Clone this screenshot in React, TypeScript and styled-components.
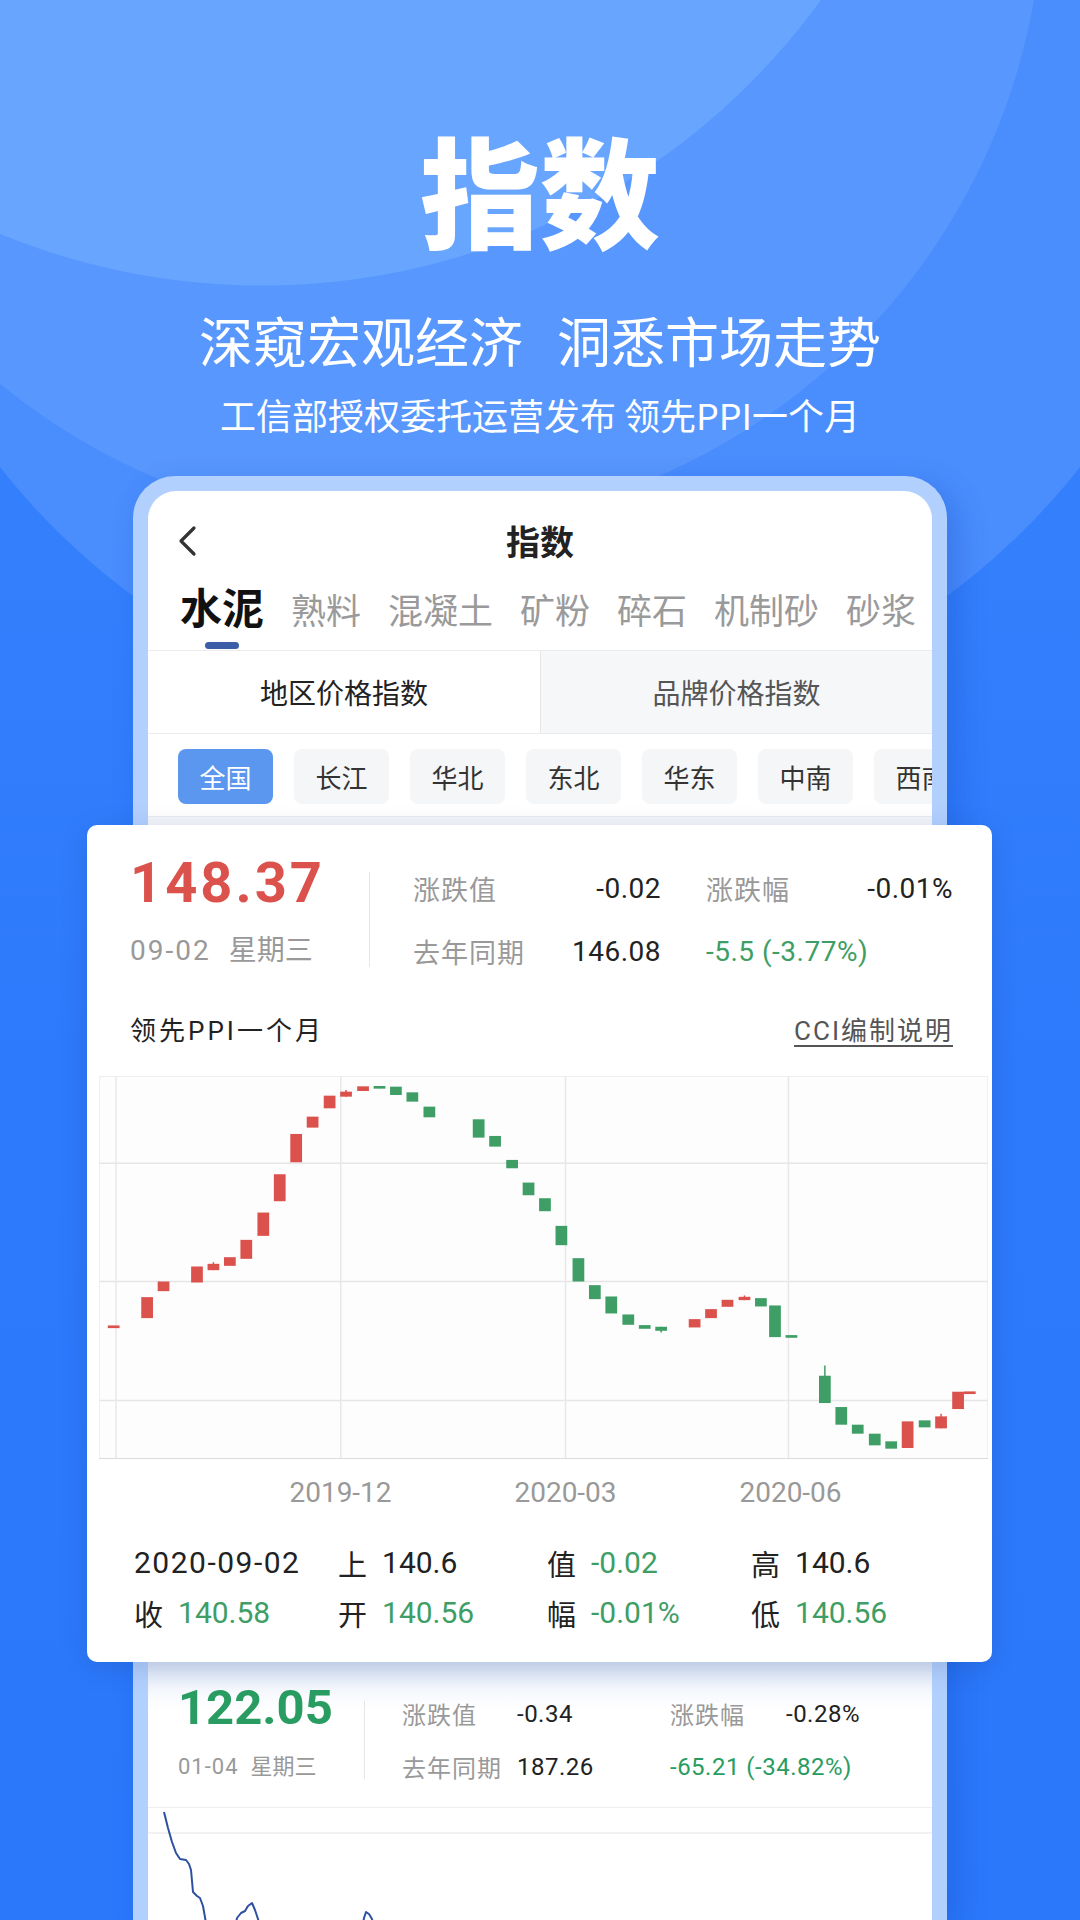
import React from 'react'
import styled, { createGlobalStyle } from 'styled-components'

const GlobalStyle = createGlobalStyle`
  html, body {
    margin: 0;
    padding: 0;
  }
  body {
    font-family: Roboto, "Noto Sans CJK SC", sans-serif;
    -webkit-font-smoothing: antialiased;
  }
`

const RED = '#db524d'
const GREEN = '#3e9e65'

const Page = styled.div`
  width: 1080px;
  height: 1920px;
  overflow: hidden;
  display: flex;
  flex-direction: column;
  align-items: center;
  background:
    radial-gradient(circle at 262px -404px, #68a5fe 689px, transparent 690px),
    radial-gradient(circle at 405px -110px, #5897fd 638px, transparent 639px),
    radial-gradient(circle at 540px 43px, #4a8dfd 686px, transparent 687px),
    linear-gradient(180deg, #3a85fc 0%, #2d7afc 55%, #2b78fb 100%);
`

const Hero = styled.header`
  display: flex;
  flex-direction: column;
  align-items: center;
  padding-top: 128px;
  color: #fff;
  font-family: "Noto Sans CJK SC", sans-serif;
`

const HeroTitle = styled.h1`
  margin: 0;
  font-size: 120px;
  line-height: 120px;
  font-weight: 900;
`

const Slogan = styled.div`
  display: flex;
  gap: 34px;
  margin-top: 62px;
  font-size: 54px;
  line-height: 60px;
`

const Byline = styled.div`
  margin-top: 22px;
  font-size: 36px;
  line-height: 44px;
`

const Phone = styled.div`
  margin-top: 40px;
  width: 814px;
  flex: 1;
  box-sizing: border-box;
  padding: 15px 15px 0;
  background: #b2d0fe;
  border-radius: 42px 42px 0 0;
  box-shadow: 10px 10px 30px rgba(16, 70, 190, 0.3);
  display: flex;
`

const Screen = styled.div`
  flex: 1;
  min-width: 0;
  background: #fff;
  border-radius: 28px 28px 0 0;
  display: flex;
  flex-direction: column;
`

const NavBar = styled.div`
  height: 60px;
  padding: 20px 28px 0;
  display: grid;
  grid-template-columns: 1fr auto 1fr;
  align-items: center;
`

const NavTitle = styled.div`
  font-family: "Noto Sans CJK SC", sans-serif;
  font-size: 34px;
  line-height: 40px;
  font-weight: 700;
  color: #222;
`

const BackIcon = () => (
  <svg width="22" height="32" viewBox="0 0 22 32">
    <path d="M18 3 L5 16 L18 29" fill="none" stroke="#333" strokeWidth="3.2" strokeLinecap="round" strokeLinejoin="round" />
  </svg>
)

const TabRow = styled.div`
  display: flex;
  align-items: flex-end;
  gap: 27px;
  padding: 12px 0 1px 32px;
  border-bottom: 1px solid #ececec;
  white-space: nowrap;
  overflow: hidden;
`

const Tab = styled.div`
  display: flex;
  flex-direction: column;
  align-items: center;
  flex: none;
  font-family: "Noto Sans CJK SC", sans-serif;
`

const TabLabel = styled.span<{ $active?: boolean }>`
  font-size: ${(p) => (p.$active ? '42px' : '35px')};
  line-height: ${(p) => (p.$active ? '46px' : '40px')};
  font-weight: ${(p) => (p.$active ? 700 : 400)};
  color: ${(p) => (p.$active ? '#111' : '#9a9a9a')};
`

const TabMark = styled.i<{ $active?: boolean }>`
  display: block;
  width: 34px;
  height: 7px;
  margin-top: 13px;
  border-radius: 4px;
  background: ${(p) => (p.$active ? '#3b5ea6' : 'transparent')};
`

const Segment = styled.div`
  display: grid;
  grid-template-columns: 1fr 1fr;
  height: 82px;
  border-bottom: 1px solid #ebebeb;
`

const SegItem = styled.div<{ $active?: boolean }>`
  display: flex;
  align-items: center;
  justify-content: center;
  font-family: "Noto Sans CJK SC", sans-serif;
  font-size: 28px;
  color: ${(p) => (p.$active ? '#222' : '#555')};
  background: ${(p) => (p.$active ? '#fff' : '#f6f7f9')};
  border-left: ${(p) => (p.$active ? 'none' : '1px solid #e6e6e6')};
`

const ChipRow = styled.div`
  display: flex;
  gap: 21px;
  padding: 15px 0 12px 30px;
  border-bottom: 1px solid #e7eaf0;
  overflow: hidden;
`

const Chip = styled.div<{ $active?: boolean }>`
  flex: none;
  width: 95px;
  height: 55px;
  border-radius: 8px;
  display: flex;
  align-items: center;
  justify-content: center;
  font-family: "Noto Sans CJK SC", sans-serif;
  font-size: 26px;
  color: ${(p) => (p.$active ? '#fff' : '#333')};
  background: ${(p) => (p.$active ? '#5b96ef' : '#f5f6f8')};
`

const Shelf = styled.div`
  height: 8px;
  background: #f3f5f9;
`

const Card = styled.section`
  position: relative;
  z-index: 1;
  margin: 0 -60px 0 -61px;
  padding: 26px 39px 29px 43px;
  background: #fff;
  border-radius: 10px;
  box-shadow: 0 6px 26px rgba(20, 50, 110, 0.18);
`

const Summary = styled.div`
  display: flex;
  align-items: flex-start;
`

const PriceBlock = styled.div<{ $width: number }>`
  width: ${(p) => p.$width}px;
  flex: none;
`

const BigPrice = styled.div<{ $size: number; $color: string; $spacing?: number }>`
  font-size: ${(p) => p.$size}px;
  line-height: ${(p) => Math.round(p.$size * 1.15)}px;
  font-weight: 700;
  letter-spacing: ${(p) => p.$spacing ?? 0}px;
  color: ${(p) => p.$color};
`

const DateLine = styled.div<{ $size: number; $gap: number; $spacing: number; $space: number }>`
  margin-top: ${(p) => p.$gap}px;
  font-size: ${(p) => p.$size}px;
  line-height: ${(p) => p.$size + 4}px;
  color: #999;
  white-space: nowrap;
  span {
    letter-spacing: ${(p) => p.$spacing}px;
    margin-right: ${(p) => p.$space}px;
  }
`

const VRule = styled.div<{ $top: number; $height: number }>`
  flex: none;
  width: 1px;
  margin-top: ${(p) => p.$top}px;
  height: ${(p) => p.$height}px;
  background: #e6e6e6;
`

const StatGrid = styled.div`
  margin: 18px 0 0 43px;
  display: grid;
  grid-template-columns: 103px 100px 100px 102px;
  column-gap: 45px;
  row-gap: 23px;
  line-height: 40px;
  white-space: nowrap;
`

const StatLabel = styled.div<{ $size?: number }>`
  font-family: "Noto Sans CJK SC", sans-serif;
  font-size: ${(p) => p.$size ?? 27}px;
  letter-spacing: 1px;
  color: #999;
`

const StatValue = styled.div<{ $color?: string; $align?: string; $span?: number; $size?: number }>`
  font-size: ${(p) => p.$size ?? 28}px;
  letter-spacing: 0.5px;
  color: ${(p) => p.$color ?? '#222'};
  text-align: ${(p) => p.$align ?? 'right'};
  grid-column: span ${(p) => p.$span ?? 1};
`

const MetaRow = styled.div`
  margin-top: 41px;
  display: flex;
  justify-content: space-between;
  font-family: Roboto, "Noto Sans CJK SC", sans-serif;
  font-size: 26px;
  line-height: 36px;
  letter-spacing: 3px;
  color: #222;
`

const MetaLink = styled.span`
  color: #555;
  letter-spacing: 2px;
  text-decoration: underline;
  text-underline-offset: 5px;
  text-decoration-thickness: 2px;
`

const ChartBox = styled.div`
  margin: 27px -35px 0 -31px;
  height: 383px;
  svg {
    display: block;
  }
`

const AxisRow = styled.div`
  margin: 18px 0 0 98px;
  display: grid;
  grid-template-columns: repeat(3, 225px);
  font-size: 28px;
  line-height: 32px;
  color: #999;
  text-align: center;
`

const InfoGrid = styled.div`
  margin: 34px 0 0 4px;
  display: grid;
  grid-template-columns: 204px 209px 204px auto;
  row-gap: 10px;
  font-size: 30px;
  line-height: 40px;
  color: #222;
  white-space: nowrap;
`

const InfoCell = styled.div`
  display: flex;
  gap: 15px;
`

const InfoKey = styled.span`
  font-family: "Noto Sans CJK SC", sans-serif;
  font-size: 29px;
`

const InfoVal = styled.span<{ $color?: string; $wide?: boolean }>`
  color: ${(p) => p.$color ?? '#222'};
  letter-spacing: ${(p) => (p.$wide ? '1.5px' : '0')};
`

const NextSummary = styled.div`
  display: flex;
  align-items: flex-start;
  padding: 18px 0 23px 30px;
  background: linear-gradient(180deg, #d7e3f7 0px, #f4f7fd 26px, #fff 48px);
  border-bottom: 1px solid #eeeeee;
`

const NextStats = styled.div`
  margin: 17px 0 0 37px;
  display: grid;
  grid-template-columns: 115px 153px 116px auto;
  row-gap: 19px;
  line-height: 34px;
  white-space: nowrap;
`

const TrendBox = styled.div`
  height: 112px;
  svg {
    display: block;
  }
`

type Candle = { x: number; o: number; c: number; up: boolean; hi?: number; lo?: number }

const c = (x: number, o: number, cl: number, up: boolean, hi?: number, lo?: number): Candle => ({ x, o, c: cl, up, hi, lo })

const candles: Candle[] = [
  c(58, 797, 805, true),
  c(115, 712, 775, true),
  c(143, 665, 694, true),
  c(200, 620, 668, true),
  c(228, 612, 631, true, 607),
  c(256, 592, 618, true),
  c(284, 540, 597, true),
  c(313, 458, 528, true),
  c(341, 343, 424, true),
  c(369, 222, 307, true),
  c(397, 170, 203, true),
  c(426, 107, 145, true),
  c(454, 95, 110, true, 90),
  c(483, 79, 93, true),
  c(511, 78, 86, false),
  c(539, 80, 105, false),
  c(567, 97, 125, false),
  c(596, 140, 172, false),
  c(680, 178, 233, false),
  c(708, 228, 260, false),
  c(737, 300, 325, false),
  c(765, 368, 406, false),
  c(793, 415, 454, false),
  c(821, 498, 556, false),
  c(850, 595, 665, false),
  c(878, 676, 718, false),
  c(906, 710, 761, false),
  c(935, 764, 795, false),
  c(963, 796, 807, false),
  c(991, 801, 813, false, undefined, 818),
  c(1048, 778, 803, true),
  c(1076, 748, 775, true),
  c(1104, 720, 741, true),
  c(1133, 711, 721, true, 707),
  c(1161, 715, 740, false),
  c(1185, 737, 832, false),
  c(1213, 826, 834, false),
  c(1270, 948, 1030, false, 917),
  c(1298, 1042, 1095, false),
  c(1326, 1095, 1122, false),
  c(1355, 1122, 1157, false),
  c(1383, 1145, 1167, false),
  c(1411, 1085, 1165, true),
  c(1440, 1082, 1103, false),
  c(1468, 1070, 1106, true, 1062),
  c(1497, 996, 1048, true),
  c(1517, 995, 1003, true),
]

const gridY = [310, 665, 1022]
const gridX = [62, 445, 828, 1208]

const CandleChart = () => (
  <svg width="889" height="383" viewBox="33 48 1515 1150" preserveAspectRatio="none">
    <rect x="33" y="48" width="1515" height="1150" fill="#fdfdfd" stroke="#ececec" strokeWidth="1.5" vectorEffect="non-scaling-stroke" />
    {gridY.map((y) => (
      <line key={y} x1="33" x2="1548" y1={y} y2={y} stroke="#e6e6e6" strokeWidth="1.5" vectorEffect="non-scaling-stroke" />
    ))}
    {gridX.map((x) => (
      <line key={x} x1={x} x2={x} y1="48" y2="1198" stroke="#e8e8e8" strokeWidth="1.5" vectorEffect="non-scaling-stroke" />
    ))}
    <line x1="33" x2="1548" y1="1198" y2="1198" stroke="#dcdcdc" strokeWidth="2" vectorEffect="non-scaling-stroke" />
    {candles.map((k) => {
      const color = k.up ? RED : GREEN
      const top = Math.min(k.o, k.c)
      const h = Math.max(Math.abs(k.c - k.o), 8)
      return (
        <g key={k.x}>
          {(k.hi || k.lo) && (
            <line x1={k.x} x2={k.x} y1={k.hi ?? top} y2={k.lo ?? top + h} stroke={color} strokeWidth="1.5" vectorEffect="non-scaling-stroke" />
          )}
          <rect x={k.x - 10} y={top} width="20" height={h} fill={color} />
        </g>
      )
    })}
  </svg>
)

const TrendLine = () => (
  <svg width="784" height="112" viewBox="0 0 784 112">
    <line x1="0" x2="784" y1="25" y2="25" stroke="#eeeeee" strokeWidth="1.5" />
    <path
      d="M16 4 L20 20 L24 34 L28 45 L32 51 L38 52 L41 56 L43 62 L45 84 L49 88 L52 90 L55 98 L58 115 L60 125 L86 125 L89 110 L93 105 L97 103 L100 98 L104 95 L107 102 L110 111 L113 125 L213 125 L216 110 L218 104 L221 106 L224 111 L226 125"
      fill="none"
      stroke="#2d50a0"
      strokeWidth="2"
      strokeLinejoin="round"
    />
  </svg>
)

const tabs = ['水泥', '熟料', '混凝土', '矿粉', '碎石', '机制砂', '砂浆']
const regions = ['全国', '长江', '华北', '东北', '华东', '中南', '西南']

const info: { k: string; v: string; green?: boolean }[][] = [
  [
    { k: '', v: '2020-09-02' },
    { k: '上', v: '140.6' },
    { k: '值', v: '-0.02', green: true },
    { k: '高', v: '140.6' },
  ],
  [
    { k: '收', v: '140.58', green: true },
    { k: '开', v: '140.56', green: true },
    { k: '幅', v: '-0.01%', green: true },
    { k: '低', v: '140.56', green: true },
  ],
]

export default function App() {
  return (
    <>
      <GlobalStyle />
      <Page>
        <Hero>
          <HeroTitle>指数</HeroTitle>
          <Slogan>
            <span>深窥宏观经济</span>
            <span>洞悉市场走势</span>
          </Slogan>
          <Byline>工信部授权委托运营发布 领先PPI一个月</Byline>
        </Hero>

        <Phone>
          <Screen>
            <NavBar>
              <BackIcon />
              <NavTitle>指数</NavTitle>
              <span />
            </NavBar>

            <TabRow>
              {tabs.map((t, i) => (
                <Tab key={t}>
                  <TabLabel $active={i === 0}>{t}</TabLabel>
                  <TabMark $active={i === 0} />
                </Tab>
              ))}
            </TabRow>

            <Segment>
              <SegItem $active>地区价格指数</SegItem>
              <SegItem>品牌价格指数</SegItem>
            </Segment>

            <ChipRow>
              {regions.map((r, i) => (
                <Chip key={r} $active={i === 0}>
                  {r}
                </Chip>
              ))}
            </ChipRow>
            <Shelf />

            <Card>
              <Summary>
                <PriceBlock $width={239}>
                  <BigPrice $size={56} $color={RED} $spacing={3}>
                    148.37
                  </BigPrice>
                  <DateLine $size={28} $gap={20} $spacing={2} $space={18}>
                    <span>09-02</span>星期三
                  </DateLine>
                </PriceBlock>
                <VRule $top={21} $height={95} />
                <StatGrid>
                  <StatLabel>涨跌值</StatLabel>
                  <StatValue>-0.02</StatValue>
                  <StatLabel>涨跌幅</StatLabel>
                  <StatValue>-0.01%</StatValue>
                  <StatLabel>去年同期</StatLabel>
                  <StatValue>146.08</StatValue>
                  <StatValue $color={GREEN} $align="left" $span={2}>
                    -5.5 (-3.77%)
                  </StatValue>
                </StatGrid>
              </Summary>

              <MetaRow>
                <span>领先PPI一个月</span>
                <MetaLink>CCI编制说明</MetaLink>
              </MetaRow>

              <ChartBox>
                <CandleChart />
              </ChartBox>

              <AxisRow>
                <span>2019-12</span>
                <span>2020-03</span>
                <span>2020-06</span>
              </AxisRow>

              <InfoGrid>
                {info.flat().map((cell, i) => (
                  <InfoCell key={i}>
                    {cell.k && <InfoKey>{cell.k}</InfoKey>}
                    <InfoVal $color={cell.green ? GREEN : undefined} $wide={!cell.k}>
                      {cell.v}
                    </InfoVal>
                  </InfoCell>
                ))}
              </InfoGrid>
            </Card>

            <NextSummary>
              <PriceBlock $width={186}>
                <BigPrice $size={49} $color="#299c61">
                  122.05
                </BigPrice>
                <DateLine $size={22} $gap={18} $spacing={1} $space={12}>
                  <span>01-04</span>星期三
                </DateLine>
              </PriceBlock>
              <VRule $top={21} $height={78} />
              <NextStats>
                <StatLabel $size={24}>涨跌值</StatLabel>
                <StatValue $size={24} $align="left">-0.34</StatValue>
                <StatLabel $size={24}>涨跌幅</StatLabel>
                <StatValue $size={24} $align="left">-0.28%</StatValue>
                <StatLabel $size={24}>去年同期</StatLabel>
                <StatValue $size={24} $align="left">187.26</StatValue>
                <StatValue $size={24} $align="left" $color="#299c61" $span={2}>
                  -65.21 (-34.82%)
                </StatValue>
              </NextStats>
            </NextSummary>

            <TrendBox>
              <TrendLine />
            </TrendBox>
          </Screen>
        </Phone>
      </Page>
    </>
  )
}
